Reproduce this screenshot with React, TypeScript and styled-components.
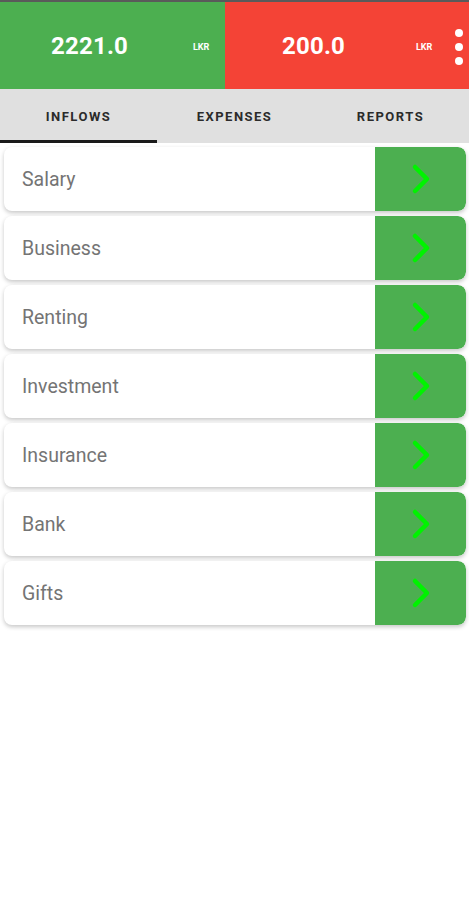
import React from "react";
import styled, { createGlobalStyle } from "styled-components";

const GlobalStyle = createGlobalStyle`
  body {
    margin: 0;
    background: #ffffff;
    font-family: Roboto, "Liberation Sans", sans-serif;
  }
`;

const Page = styled.div`
  width: 469px;
  min-height: 900px;
  background: #ffffff;
  border-top: 2px solid #5a5a5a;
`;

const Header = styled.div`
  display: grid;
  grid-template-columns: 225px 1fr;
  height: 87px;
`;

const Balance = styled.div<{ $color: string }>`
  position: relative;
  display: flex;
  align-items: center;
  background: ${(p) => p.$color};
  color: #ffffff;
`;

const Amount = styled.div<{ $left: number }>`
  margin-left: ${(p) => p.$left}px;
  font-size: 24px;
  font-weight: 700;
  letter-spacing: 0.2px;
`;

const Currency = styled.span<{ $left: number }>`
  position: absolute;
  left: ${(p) => p.$left}px;
  top: 40px;
  font-size: 9px;
  font-weight: 700;
`;

const Dots = styled.div`
  position: absolute;
  right: 6px;
  top: 27px;
  display: flex;
  flex-direction: column;
  gap: 6px;

  span {
    width: 8px;
    height: 8px;
    border-radius: 50%;
    background: #ffffff;
  }
`;

const Tabs = styled.div`
  display: grid;
  grid-template-columns: 157px 155px 1fr;
  height: 54px;
  background: #e0e0e0;
`;

const Tab = styled.div<{ $active?: boolean }>`
  display: flex;
  align-items: center;
  justify-content: center;
  font-size: 13px;
  font-weight: 700;
  letter-spacing: 1.5px;
  color: #2b2b2b;
  border-bottom: 3px solid ${(p) => (p.$active ? "#1a1a1a" : "transparent")};
  padding-top: 3px;
`;

const List = styled.div`
  display: flex;
  flex-direction: column;
  gap: 5px;
  padding: 4px 3px 0 4px;
`;

const Card = styled.div`
  display: flex;
  height: 64px;
  background: #ffffff;
  border-radius: 8px;
  box-shadow: 0 2px 4px rgba(0, 0, 0, 0.22);
  overflow: hidden;
`;

const Label = styled.div`
  flex: 1;
  display: flex;
  align-items: center;
  padding-left: 18px;
  font-size: 19.5px;
  color: #747474;
`;

const Go = styled.div`
  width: 91px;
  display: flex;
  align-items: center;
  justify-content: center;
  background: #4caf50;
  border-radius: 0 8px 8px 0;
`;

const Chevron = () => (
  <svg width="24" height="34" viewBox="0 0 24 34">
    <path
      d="M6 5 L18 17 L6 29"
      fill="none"
      stroke="#00f300"
      strokeWidth="4.5"
      strokeLinecap="round"
      strokeLinejoin="round"
    />
  </svg>
);

const categories = [
  "Salary",
  "Business",
  "Renting",
  "Investment",
  "Insurance",
  "Bank",
  "Gifts",
];

const App = () => {
  return (
    <>
      <GlobalStyle />
      <Page>
        <Header>
          <Balance $color="#4caf50">
            <Amount $left={51}>2221.0</Amount>
            <Currency $left={193}>LKR</Currency>
          </Balance>
          <Balance $color="#f44336">
            <Amount $left={57}>200.0</Amount>
            <Currency $left={191}>LKR</Currency>
            <Dots>
              <span />
              <span />
              <span />
            </Dots>
          </Balance>
        </Header>
        <Tabs>
          <Tab $active>INFLOWS</Tab>
          <Tab>EXPENSES</Tab>
          <Tab>REPORTS</Tab>
        </Tabs>
        <List>
          {categories.map((name) => (
            <Card key={name}>
              <Label>{name}</Label>
              <Go>
                <Chevron />
              </Go>
            </Card>
          ))}
        </List>
      </Page>
    </>
  );
};

export default App;
